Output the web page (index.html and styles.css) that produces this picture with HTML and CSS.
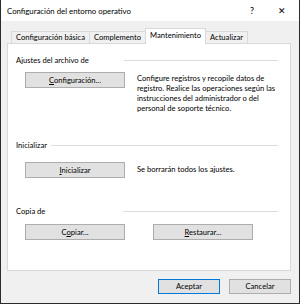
FILE: index.html
```html
<!DOCTYPE html>
<html>
<head>
<meta charset="utf-8">
<link rel="stylesheet" href="styles.css">
</head>
<body>
<div class="window">
  <div class="titlebar">
    <span class="title">Configuración del entorno operativo</span>
    <span class="help">?</span>
    <span class="close">✕</span>
  </div>
  <div class="tabs">
    <div class="tab">Configuración básica</div>
    <div class="tab">Complemento</div>
    <div class="tab active">Mantenimiento</div>
    <div class="tab">Actualizar</div>
  </div>
  <div class="panel">
    <div class="group g1">
      <div class="ghead"><span class="glabel">Ajustes del archivo de</span><i class="gline"></i></div>
      <div class="grow r1">
        <div class="btn"><u>C</u>onfiguración...</div>
        <p class="desc">Configure registros y recopile datos de registro. Realice las operaciones según las instrucciones del administrador o del personal de soporte técnico.</p>
      </div>
    </div>
    <div class="group g2">
      <div class="ghead"><span class="glabel">Inicializar</span><i class="gline"></i></div>
      <div class="grow r2">
        <div class="btn"><u>I</u>nicializar</div>
        <p class="desc one">Se borrarán todos los ajustes.</p>
      </div>
    </div>
    <div class="group g3">
      <div class="ghead"><span class="glabel">Copia de</span><i class="gline"></i></div>
      <div class="grow r3">
        <div class="btn">C<u>o</u>piar...</div>
        <div class="btn"><u>R</u>estaurar...</div>
      </div>
    </div>
  </div>
  <div class="footer">
    <div class="btn fbtn default">Aceptar</div>
    <div class="btn fbtn">Cancelar</div>
  </div>
</div>
</body>
</html>
```
FILE: styles.css
```css
html, body {
  margin: 0;
  padding: 0;
}
body {
  width: 300px;
  height: 304px;
  font-family: Lato, "Liberation Sans", sans-serif;
  font-size: 7.6px;
  line-height: 10px;
  color: #000;
}
.window {
  box-sizing: border-box;
  width: 300px;
  height: 304px;
  border: 1px solid #2b2b2b;
  border-top: none;
  background: #f0f0f0;
  display: flex;
  flex-direction: column;
}
.titlebar {
  height: 21px;
  background: #fff;
  display: flex;
  align-items: center;
  padding-left: 6px;
  font-size: 7.8px;
}
.title {
  flex: 1;
}
.help {
  width: 30px;
  text-align: center;
  font-size: 9px;
}
.close {
  width: 30px;
  text-align: center;
  font-size: 9px;
  margin-right: 2px;
}
.tabs {
  display: flex;
  align-items: flex-end;
  margin-top: 7px;
  margin-left: 10px;
  height: 15px;
}
.tab {
  box-sizing: border-box;
  height: 12px;
  line-height: 11px;
  padding: 0 4px;
  border: 1px solid #d9d9d9;
  border-bottom: none;
  margin-right: -1px;
  background: #f0f0f0;
}
.tab.active {
  line-height: 13px;
  background: #fff;
  position: relative;
  z-index: 1;
  margin-bottom: -1px;
  height: 16px;
  padding: 0 4px;
}
.panel {
  box-sizing: border-box;
  margin: 0 8px 0 6px;
  height: 228px;
  background: #fff;
  border: 1px solid #d9d9d9;
  padding: 0 12px 0 8px;
}
.ghead {
  display: flex;
  align-items: center;
  height: 10px;
}
.glabel {
  flex: none;
}
.g1 .glabel { width: 108px; }
.g3 .glabel { width: 107px; }
.gline {
  flex: 1;
  height: 1px;
  background: #dcdcdc;
}
.g2 .gline { margin-left: 4px; }
.g1 .ghead { margin-top: 11px; }
.g2 .ghead { margin-top: 27px; }
.g3 .ghead { margin-top: 28px; }
.grow {
  display: flex;
  align-items: flex-start;
  padding-left: 9px;
}
.r1 { margin-top: 7px; }
.r2 { margin-top: 12px; }
.r3 { margin-top: 8px; }
.btn {
  box-sizing: border-box;
  width: 100px;
  height: 16px;
  line-height: 14px;
  text-align: center;
  background: #e1e1e1;
  border: 1px solid #adadad;
  flex: none;
}
.r3 .btn + .btn {
  margin-left: 28px;
}
.desc {
  margin: 1px 0 0 12px;
  width: 148px;
}
.desc.one {
  margin-top: 2px;
}
.footer {
  display: flex;
  justify-content: flex-end;
  gap: 9px;
  margin-top: 8px;
  padding-right: 8px;
}
.fbtn {
  width: 62px;
  height: 15px;
  line-height: 13px;
}
.fbtn.default {
  border-color: #0078d7;
}
```
